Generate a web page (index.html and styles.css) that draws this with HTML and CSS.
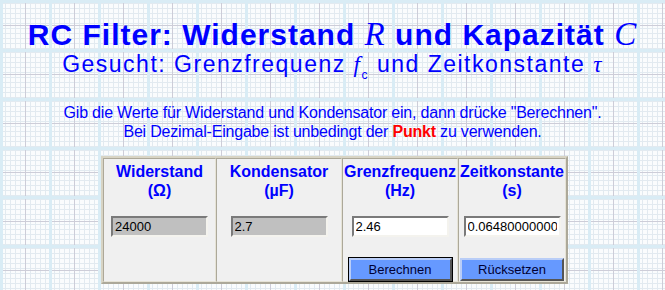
FILE: index.html
```html
<!DOCTYPE html>
<html lang="de">
<head>
    <meta charset="UTF-8">
    <title>RC Filter</title>
    <link rel="stylesheet" href="styles.css">
</head>
<body>

    <h1 class="title">RC Filter: Widerstand <i class="var">R</i> und Kapazität <i class="var">C</i></h1>
    <h2 class="subtitle">Gesucht: Grenzfrequenz <i class="var">f</i><sub>c</sub> und Zeitkonstante <i class="var">τ</i></h2>

    <p class="hint">
        Gib die Werte für Widerstand und Kondensator ein, dann drücke "Berechnen".<br>
        Bei Dezimal-Eingabe ist unbedingt der <b class="red">Punkt</b> zu verwenden.
    </p>

    <table class="calc">
        <tr>
            <td class="col-r">
                <div class="head">Widerstand<br>(Ω)</div>
                <input type="text" class="field readonly" value="24000" readonly>
            </td>
            <td class="col-c">
                <div class="head">Kondensator<br>(µF)</div>
                <input type="text" class="field readonly" value="2.7" readonly>
            </td>
            <td class="col-f">
                <div class="head">Grenzfrequenz<br>(Hz)</div>
                <input type="text" class="field" value="2.46">
                <button class="btn btn-focus">Berechnen</button>
            </td>
            <td class="col-t">
                <div class="head">Zeitkonstante<br>(s)</div>
                <input type="text" class="field" value="0.064800000000">
                <button class="btn">Rücksetzen</button>
            </td>
        </tr>
    </table>

</body>
</html>
```

FILE: styles.css
```css
body {

    margin: 0;
    padding: 0;
    font-family: "Liberation Sans", Arial, sans-serif;
    color: #0000ff;
    text-align: center;
    background-color: #fafcfd;
    background-image:
        linear-gradient(90deg, #d9ecf5 3px, transparent 3px),
        linear-gradient(#d9ecf5 3px, transparent 3px),
        linear-gradient(90deg, transparent 25px, #cdcdd8 25px, #cdcdd8 26px, transparent 26px),
        linear-gradient(transparent 25px, #cdcdd8 25px, #cdcdd8 26px, transparent 26px),
        repeating-linear-gradient(90deg, #e2eaf0 0, #e2eaf0 1px, transparent 1px, transparent 5px),
        repeating-linear-gradient(0deg, #e2eaf0 0, #e2eaf0 1px, transparent 1px, transparent 5px);
    background-size: 49px 49px;
    min-height: 290px;

}

.var {

    font-family: "Liberation Serif", "Times New Roman", serif;
    font-style: italic;

}

.title {

    font-size: 30px;
    font-weight: bold;
    letter-spacing: 1px;
    margin: 0;
    padding-top: 17px;
    line-height: 34px;

}

.title .var {

    font-weight: normal;
    font-size: 33px;

}

.subtitle {

    font-size: 23px;
    font-weight: normal;
    letter-spacing: 1.5px;
    margin: 0;
    line-height: 24px;

}

.subtitle sub {

    font-size: 12px;
    vertical-align: -7px;

}

.hint {

    font-size: 16px;
    letter-spacing: -0.2px;
    line-height: 19px;
    margin: 16px 0 0 0;

}

.red {

    color: #ff0000;

}

.calc {

    margin: 15px auto 0 auto;
    background-color: #f0f0f0;
    border-collapse: separate;
    border-spacing: 0;
    border: 2px solid;
    border-color: #d8d4c4 #aca899 #aca899 #d8d4c4;
    position: relative;
    left: 2px;

}

.calc td {

    vertical-align: top;
    padding: 3px 0 0 0;
    height: 116px;
    border: 1px solid;
    border-color: #aca899 #e6e3d6 #e6e3d6 #aca899;

}

.col-r { width: 111px; }
.col-c { width: 124px; }
.col-f { width: 114px; }
.col-t { width: 106px; }

.head {

    font-size: 16px;
    font-weight: bold;
    line-height: 19px;
    height: 38px;

}

.field {

    display: block;
    box-sizing: border-box;
    width: 97px;
    height: 21px;
    margin: 16px auto 0 auto;
    padding: 1px 2px;
    font-family: "Liberation Sans", Arial, sans-serif;
    font-size: 13px;
    color: #000000;
    background-color: #ffffff;
    border: 2px solid;
    border-color: #7a7a7a #f4f3ee #f4f3ee #7a7a7a;
    outline: none;

}

.readonly {

    background-color: #c0c0c0;

}

.btn {

    display: block;
    box-sizing: border-box;
    width: 104px;
    height: 23px;
    margin: 21px auto 0 auto;
    font-family: "Liberation Sans", Arial, sans-serif;
    font-size: 13px;
    color: #000033;
    background-color: #6699ff;
    border: 2px solid;
    border-color: #b9cdf7 #555555 #555555 #b9cdf7;
    padding: 0;

}

.btn-focus {

    outline: 1px solid #000000;
    width: 103px;

}
```
